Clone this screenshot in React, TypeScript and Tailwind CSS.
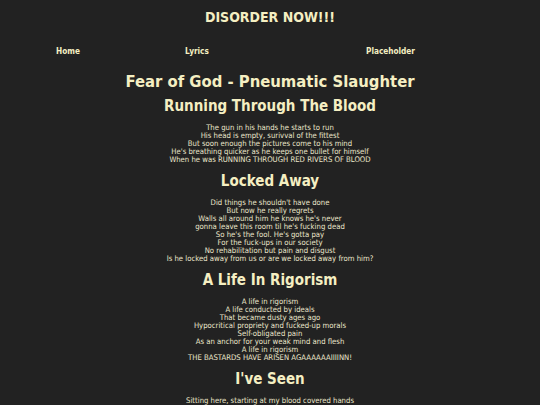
import React from "react";

const songs = [
  {
    title: "Running Through The Blood",
    lines: [
      "The gun in his hands he starts to run",
      "His head is empty, surivval of the fittest",
      "But soon enough the pictures come to his mind",
      "He's breathing quicker as he keeps one bullet for himself",
      "When he was RUNNING THROUGH RED RIVERS OF BLOOD",
    ],
  },
  {
    title: "Locked Away",
    lines: [
      "Did things he shouldn't have done",
      "But now he really regrets",
      "Walls all around him he knows he's never",
      "gonna leave this room til he's fucking dead",
      "So he's the fool. He's gotta pay",
      "For the fuck-ups in our society",
      "No rehabilitation but pain and disgust",
      "Is he locked away from us or are we locked away from him?",
    ],
  },
  {
    title: "A Life In Rigorism",
    lines: [
      "A life in rigorism",
      "A life conducted by ideals",
      "That became dusty ages ago",
      "Hypocritical propriety and fucked-up morals",
      "Self-obligated pain",
      "As an anchor for your weak mind and flesh",
      "A life in rigorism",
      "THE BASTARDS HAVE ARISEN AGAAAAAAIIIINN!",
    ],
  },
  {
    title: "I've Seen",
    lines: [
      "Sitting here, starting at my blood covered hands",
      "Thinking of all the dark things I've seen",
      "The faces of the dead are haunting me",
    ],
  },
];

export default function App() {
  return (
    <div className="min-h-screen bg-[#222222] text-[#f5efc2] font-['DejaVu_Sans_Condensed','DejaVu_Sans',Verdana,sans-serif] [font-stretch:condensed] pb-8">
      <h1 className="pt-[7px] text-center text-[14px] leading-[20px] font-bold">DISORDER NOW!!!</h1>

      <nav className="mt-[18px] flex text-[8.2px] leading-[12px] font-bold pl-[56px]">
        <a className="w-[129px]">Home</a>
        <a className="w-[181px]">Lyrics</a>
        <a>Placeholder</a>
      </nav>

      <h2 className="mt-[16px] text-center text-[16.5px] leading-[18px] font-bold">
        Fear of God - Pneumatic Slaughter
      </h2>

      {songs.map((song, i) => (
        <section key={song.title}>
          <h3
            className={`text-center text-[15px] leading-[18px] font-bold ${
              i === 0 ? "mt-[6px]" : "mt-[8px]"
            }`}
          >
            {song.title}
          </h3>
          <p className="mt-[9px] text-center text-[7.7px] leading-[8px] text-[#ece7cc]">
            {song.lines.map((line) => (
              <span key={line} className="block">
                {line}
              </span>
            ))}
          </p>
        </section>
      ))}
    </div>
  );
}
